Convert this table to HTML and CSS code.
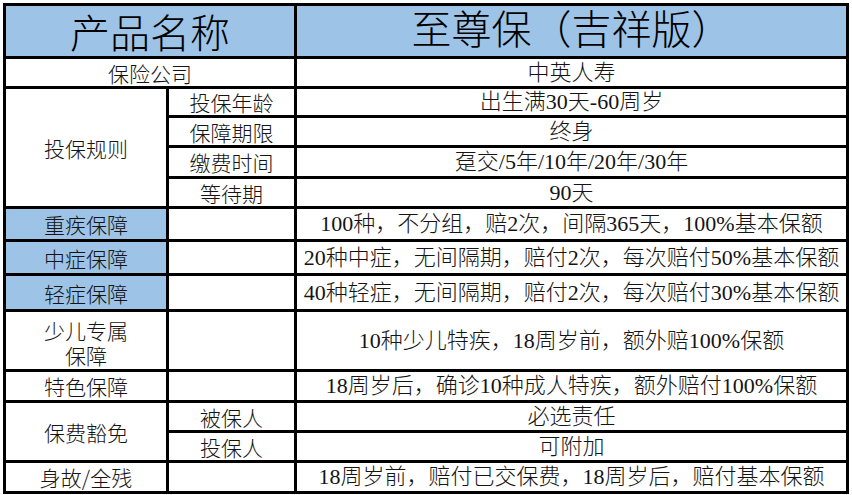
FILE: index.html
```html
<!DOCTYPE html>
<html lang="zh">
<head>
<meta charset="utf-8">
<title>至尊保（吉祥版）</title>
<link rel="stylesheet" href="styles.css">
</head>
<body>
<div class="grid">
  <div class="cell head span2 sans">产品名称</div>
  <div class="cell head serif">至尊保（吉祥版）</div>

  <div class="cell span2 sans">保险公司</div>
  <div class="cell serif">中英人寿</div>

  <div class="cell rs4 sans">投保规则</div>
  <div class="cell sans">投保年龄</div>
  <div class="cell serif">出生满30天-60周岁</div>
  <div class="cell sans">保障期限</div>
  <div class="cell serif">终身</div>
  <div class="cell sans">缴费时间</div>
  <div class="cell serif">趸交/5年/10年/20年/30年</div>
  <div class="cell sans">等待期</div>
  <div class="cell serif">90天</div>

  <div class="cell blue sans">重疾保障</div>
  <div class="cell"></div>
  <div class="cell serif">100种，不分组，赔2次，间隔365天，100%基本保额</div>

  <div class="cell blue sans">中症保障</div>
  <div class="cell"></div>
  <div class="cell serif">20种中症，无间隔期，赔付2次，每次赔付50%基本保额</div>

  <div class="cell blue sans">轻症保障</div>
  <div class="cell"></div>
  <div class="cell serif">40种轻症，无间隔期，赔付2次，每次赔付30%基本保额</div>

  <div class="cell sans two"><span class="ln">少儿专属</span><span class="ln">保障</span></div>
  <div class="cell"></div>
  <div class="cell serif">10种少儿特疾，18周岁前，额外赔100%保额</div>

  <div class="cell sans">特色保障</div>
  <div class="cell"></div>
  <div class="cell serif">18周岁后，确诊10种成人特疾，额外赔付100%保额</div>

  <div class="cell rs2 sans">保费豁免</div>
  <div class="cell sans">被保人</div>
  <div class="cell serif">必选责任</div>
  <div class="cell sans">投保人</div>
  <div class="cell serif">可附加</div>

  <div class="cell sans">身故/全残</div>
  <div class="cell"></div>
  <div class="cell serif">18周岁前，赔付已交保费，18周岁后，赔付基本保额</div>
</div>
</body>
</html>
```
FILE: styles.css
```css
html, body {
  margin: 0;
  padding: 0;
  background: #ffffff;
}
body {
  padding: 3px 0 0 3px;
}
.grid {
  display: grid;
  width: 840px;
  padding: 3px;
  gap: 3px;
  background: #000000;
  grid-template-columns: 160px 125px 549px;
  grid-template-rows: 50px 27px 26px 27px 28px 27px 30px 31px 33px 57px 28px 27px 27px 28px;
}
.cell {
  background: #ffffff;
  display: flex;
  align-items: center;
  justify-content: center;
  text-align: center;
  font-size: 21px;
  line-height: 24px;
  color: #141414;
  white-space: nowrap;
}
.sans {
  font-family: "Noto Sans CJK SC", "Noto Sans", sans-serif;
  font-weight: 300;
}
.serif {
  font-family: "Liberation Serif", "Noto Sans CJK SC", serif;
  font-weight: 300;
  font-size: 22px;
}
.head {
  background: #9dc3e6;
  font-size: 40px;
  line-height: 46px;
  color: #000000;
}
.blue {
  background: #9dc3e6;
}
.span2 {
  grid-column: span 2;
}
.rs4 {
  grid-row: span 4;
}
.rs2 {
  grid-row: span 2;
}
.two {
  flex-direction: column;
  gap: 1px;
  padding-top: 4px;
}
.ln {
  display: block;
  line-height: 24px;
}
```
